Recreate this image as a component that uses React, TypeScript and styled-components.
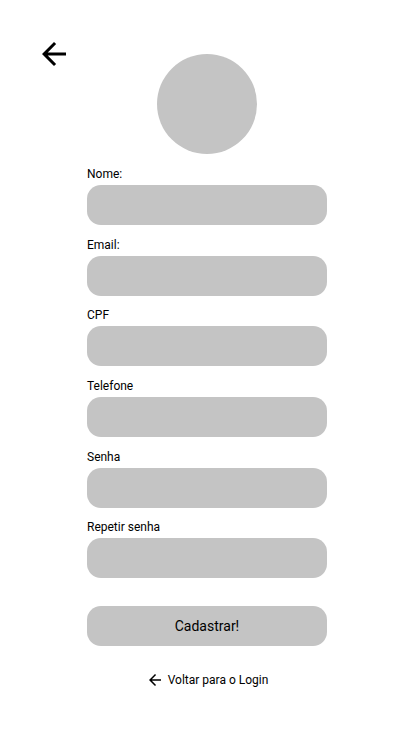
import styled, { createGlobalStyle } from 'styled-components';

const GlobalStyle = createGlobalStyle`
  html, body {
    margin: 0;
    padding: 0;
    background: #fff;
  }
  body {
    font-family: Roboto, "Liberation Sans", Arial, sans-serif;
    color: #000;
  }
`;

const BackIcon = ({ size }: { size: number }) => (
  <svg width={size} height={size} viewBox="0 0 24 24" fill="currentColor">
    <path d="M20 11H7.83l5.59-5.59L12 4l-8 8 8 8 1.41-1.41L7.83 13H20v-2z" />
  </svg>
);

const fields = ['Nome:', 'Email:', 'CPF', 'Telefone', 'Senha', 'Repetir senha'];

export default function App() {
  return (
    <>
      <GlobalStyle />
      <Page>
        <TopBar>
          <BackButton aria-label="Voltar">
            <BackIcon size={36} />
          </BackButton>
          <Avatar />
          <span />
        </TopBar>
        <Form>
          {fields.map((label) => (
            <Field key={label}>
              <FieldLabel>{label}</FieldLabel>
              <TextInput />
            </Field>
          ))}
        </Form>
        <SubmitButton>Cadastrar!</SubmitButton>
        <BackLink>
          <BackIcon size={18} />
          Voltar para o Login
        </BackLink>
      </Page>
    </>
  );
}

const Page = styled.div`
  width: 414px;
  min-height: 736px;
  padding-top: 36px;
  box-sizing: border-box;
  display: flex;
  flex-direction: column;
  align-items: center;
`;

const TopBar = styled.div`
  width: 100%;
  display: grid;
  grid-template-columns: 1fr auto 1fr;
  align-items: start;
`;

const BackButton = styled.button`
  justify-self: start;
  margin-left: 36px;
  padding: 0;
  border: none;
  background: none;
  width: 36px;
  height: 36px;
  color: #000;
  cursor: pointer;
  display: flex;
`;

const Avatar = styled.div`
  margin-top: 18px;
  width: 100px;
  height: 100px;
  border-radius: 50%;
  background-color: #c4c4c4;
`;

const Form = styled.div`
  margin-top: 13px;
  width: 240px;
  display: flex;
  flex-direction: column;
  gap: 12.7px;
`;

const Field = styled.label`
  display: flex;
  flex-direction: column;
  gap: 4px;
`;

const FieldLabel = styled.span`
  font-size: 12px;
  line-height: 14px;
`;

const TextInput = styled.input`
  height: 40px;
  border: none;
  border-radius: 14px;
  background-color: #c4c4c4;
  padding: 0 14px;
  font-family: inherit;
  outline: none;
`;

const SubmitButton = styled.button`
  margin-top: 28px;
  width: 240px;
  height: 40px;
  border: none;
  border-radius: 14px;
  background-color: #c4c4c4;
  font-family: Roboto, sans-serif;
  font-size: 14px;
  color: #000;
  cursor: pointer;
`;

const BackLink = styled.a`
  margin-top: 25px;
  display: flex;
  align-items: center;
  gap: 4px;
  font-size: 12px;
  line-height: 16px;
  color: #000;
  cursor: pointer;
`;
